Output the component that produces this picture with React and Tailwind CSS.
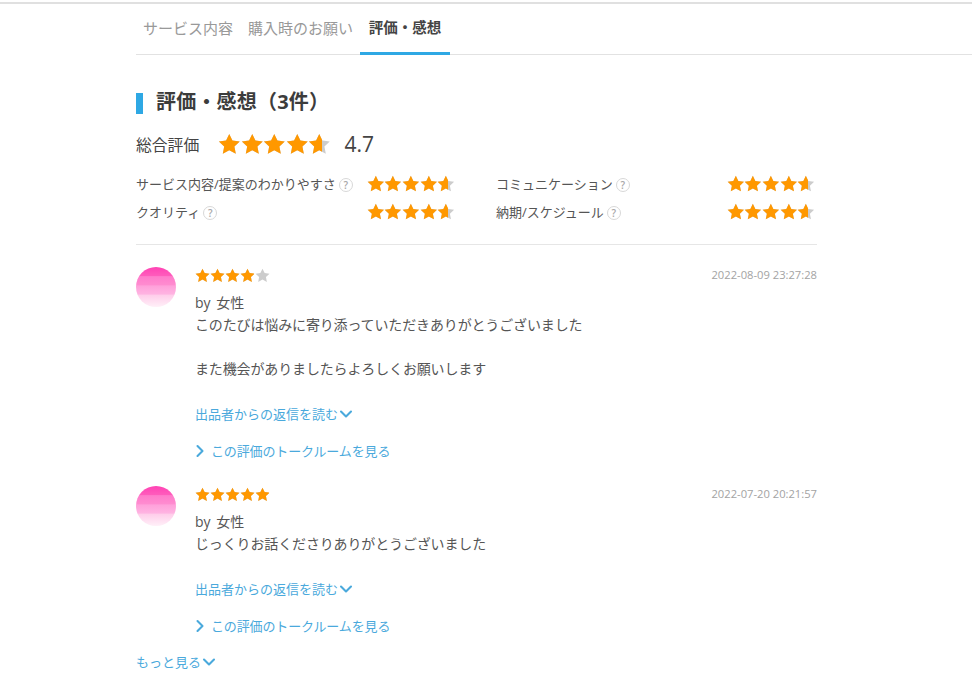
import React from 'react';
import { ChevronDown, ChevronRight } from 'lucide-react';

const STAR = 'M12 1l3.4 7.1 7.8 1-5.7 5.4 1.5 7.7L12 18.4l-6.9 3.8 1.5-7.7L.9 9.1l7.7-1z';

function StarRow({ size, gap, color }) {
  return (
    <div className="flex shrink-0" style={{ gap }}>
      {[0, 1, 2, 3, 4].map((i) => (
        <svg key={i} width={size} height={size} viewBox="0 0 24 24" className="shrink-0">
          <path d={STAR} fill={color} />
        </svg>
      ))}
    </div>
  );
}

function Stars({ size, gap, value }) {
  const total = size * 5 + gap * 4;
  const pct = value / 5;
  return (
    <div className="relative shrink-0" style={{ width: total, height: size }}>
      <StarRow size={size} gap={gap} color="#cccccc" />
      <div className="absolute left-0 top-0 overflow-hidden" style={{ width: total * pct, height: size }}>
        <div style={{ width: total }}>
          <StarRow size={size} gap={gap} color="#ff9800" />
        </div>
      </div>
    </div>
  );
}

function Help() {
  return (
    <span className="ml-[3px] flex h-[14px] w-[14px] items-center justify-center rounded-full border-[1.5px] border-[#d8d8d8] text-[10px] font-semibold leading-none text-[#a8a8a8]">?</span>
  );
}

function Metric({ label }) {
  return (
    <div className="flex items-center justify-between h-[28px]">
      <div className="flex items-center text-[13px] text-[#555]">
        <span>{label}</span>
        <Help />
      </div>
      <div className="-mt-[2px]">
        <Stars size={17.7} gap={0} value={4.6} />
      </div>
    </div>
  );
}

function Review({ stars, date, children }) {
  return (
    <div className="flex">
      <div className="w-[40px] h-[40px] rounded-full bg-[linear-gradient(#ff42b4_0%,#ff5cbc_22%,#ff7ccb_24%,#ff8cd0_45%,#ffa0da_47%,#ffb4e2_68%,#ffcdea_70%,#fff0f8_100%)] shrink-0 mt-[2px]" />
      <div className="ml-[19px] flex-1">
        <div className="flex justify-between items-center h-[20px]">
          <div className="-ml-[0.5px]">
            <Stars size={15} gap={-0.2} value={stars} />
          </div>
          <span className="text-[11.2px] text-[#a3a3a3]">{date}</span>
        </div>
        <p className="text-[14px] leading-[22px] text-[#555] mt-[7px] [word-spacing:2px]">by 女性</p>
        <div className="text-[14px] leading-[22px] text-[#555] tracking-[-0.14px]">{children}</div>
        <button className="flex items-center text-[13px] leading-[22px] text-[#4aa9dc] mt-[23px]">
          出品者からの返信を読む
          <ChevronDown className="w-[20px] h-[20px] -ml-[2px] stroke-[2.5]" />
        </button>
        <button className="flex items-center text-[13px] leading-[22px] text-[#4aa9dc] mt-[15px] tracking-[-0.14px]">
          <ChevronRight className="w-[20px] h-[20px] -ml-[5px] mr-[1px] stroke-[2.5]" />
          この評価のトークルームを見る
        </button>
      </div>
    </div>
  );
}

export default function App() {
  return (
    <div className="min-h-[688px] w-[972px] overflow-hidden bg-white font-['Open_Sans','Noto_Sans_CJK_JP',sans-serif]">
      <div className="mt-[2px] h-[2px] bg-[#e0e0e0]" />

      {/* Tabs */}
      <div className="ml-[136px] flex h-[51px] border-b border-[#e2e2e2] text-[15px]">
        <div className="flex items-center pl-[7px] pr-[7px] pb-[2px] text-[#999]">サービス内容</div>
        <div className="flex items-center pl-[8px] pr-[7px] pb-[2px] text-[#999]">購入時のお願い</div>
        <div className="flex w-[90px] items-center justify-center border-b-[3px] border-[#2ea8e4] -mb-px font-bold text-[14.5px] text-[#444]">評価・感想</div>
      </div>

      <div className="ml-[136px] w-[681px]">
        <h2 className="mt-[38px] flex h-[21px] items-center border-l-[7px] border-[#2ea8e4] pl-[13px] pb-[4px] text-[20px] tracking-[0.2px] font-bold text-[#3c3c3c]">評価・感想（3件）</h2>

        <div className="mt-[18px] flex h-[25px] items-center">
          <span className="w-[82px] pt-[2px] text-[15.8px] text-[#444]">総合評価</span>
          <div className="-mt-[1px]">
            <Stars size={22.5} gap={0} value={4.6} />
          </div>
          <span className="ml-[14px] text-[21px] text-[#444]">4.7</span>
        </div>

        <div className="mt-[14px] flex border-b border-[#e6e6e6] pb-[17px]">
          <div className="w-[319px]">
            <Metric label="サービス内容/提案のわかりやすさ" />
            <Metric label="クオリティ" />
          </div>
          <div className="ml-[41px] w-[319px]">
            <Metric label="コミュニケーション" />
            <Metric label="納期/スケジュール" />
          </div>
        </div>

        <div className="mt-[20px]">
          <Review stars={4} date="2022-08-09 23:27:28">
            <p>このたびは悩みに寄り添っていただきありがとうございました</p>
            <p className="mt-[22px]">また機会がありましたらよろしくお願いします</p>
          </Review>
        </div>

        <div className="mt-[22px]">
          <Review stars={5} date="2022-07-20 20:21:57">
            <p>じっくりお話くださりありがとうございました</p>
          </Review>
        </div>

        <button className="mt-[14px] flex items-center text-[13px] leading-[22px] text-[#4aa9dc]">
          もっと見る
          <ChevronDown className="w-[20px] h-[20px] -ml-[2px] stroke-[2.5]" />
        </button>
      </div>
    </div>
  );
}
